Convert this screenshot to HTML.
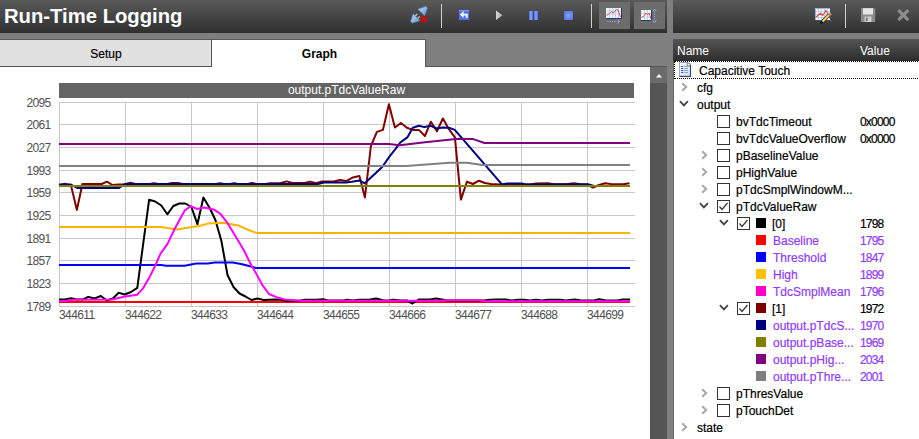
<!DOCTYPE html>
<html><head><meta charset="utf-8">
<style>
html,body{margin:0;padding:0;}
body{width:919px;height:439px;position:relative;overflow:hidden;background:#7f7f7f;font-family:"Liberation Sans", sans-serif;}
.ab{position:absolute;}
.hdr{position:absolute;top:0;height:33px;background:linear-gradient(#5a5a5a,#2f2f2f);}
.yl{position:absolute;left:0;width:50.5px;text-align:right;font-size:12px;line-height:16px;color:#505050;letter-spacing:-0.7px;}
.xl{position:absolute;top:307px;font-size:12px;line-height:16px;color:#505050;letter-spacing:-0.6px;}
.tt{position:absolute;font-size:12px;line-height:17px;color:#000;white-space:nowrap;-webkit-text-stroke:0.2px currentColor;}
.tt.p{color:#8f3cf5;}
.v{letter-spacing:-0.8px;}
.sep{position:absolute;width:1px;background:#d0d0d0;}
</style></head><body>
<!-- left header -->
<div class="hdr" style="left:0;width:667px"></div>
<div class="ab" style="left:4px;top:3px;font-size:20.25px;font-weight:bold;color:#fff;line-height:26px;">Run-Time Logging</div>
<!-- right header -->
<div class="hdr" style="left:673px;width:246px;"></div>
<svg class="ab" style="left:0;top:0" width="919" height="33">
  <defs>
    <linearGradient id="plug" x1="0" y1="0" x2="0" y2="1"><stop offset="0" stop-color="#b9d3f2"/><stop offset="1" stop-color="#6d9ad4"/></linearGradient>
    <linearGradient id="bl" x1="0" y1="0" x2="1" y2="0"><stop offset="0" stop-color="#4a6cf2"/><stop offset="0.5" stop-color="#8aa4fa"/><stop offset="1" stop-color="#4a6cf2"/></linearGradient>
    <radialGradient id="stopg" cx="0.5" cy="0.5" r="0.7"><stop offset="0" stop-color="#8aa4fa"/><stop offset="1" stop-color="#4a6cf2"/></radialGradient>
    <linearGradient id="playg" x1="0" y1="0" x2="1" y2="0"><stop offset="0" stop-color="#d4d4d4"/><stop offset="1" stop-color="#b0b0b0"/></linearGradient>
  </defs>
  <!-- disconnect icon -->
  <g transform="translate(418.9,14.8) rotate(-45)">
    <path d="M3.3,-4.6 L3.3,4.6 Q7,3.2 9.6,1.6 L10.8,1.6 L10.8,-1.6 L9.6,-1.6 Q7,-3.2 3.3,-4.6 Z" fill="url(#plug)" stroke="#5f8cc8" stroke-width="0.7"/>
    <path d="M-3.3,-4.6 L-3.3,4.6 Q-7,3.2 -9.2,1.6 L-10.4,1.6 L-10.4,-1.6 L-9.2,-1.6 Q-7,-3.2 -3.3,-4.6 Z" fill="url(#plug)" stroke="#5f8cc8" stroke-width="0.7"/>
    <rect x="-3.3" y="-2.4" width="2.8" height="1.3" fill="#c8c8c8"/>
    <rect x="-3.3" y="1.1" width="2.8" height="1.3" fill="#c8c8c8"/>
  </g>
  <path d="M420.8,16.5 L426.5,22.2 M426.5,16.5 L420.8,22.2" stroke="#e00000" stroke-width="2"/>
  <!-- back -->
  <rect x="459" y="10" width="10" height="10" fill="#5274f2"/>
  <rect x="459" y="10" width="10" height="1" fill="#7e98f8"/>
  <path d="M460,14.5 L463.6,11 V13.7 H467.6 V18 H465.9 V15.5 H463.6 V18 Z" fill="#fff"/>
  <!-- play -->
  <path d="M496,10.5 L502.4,15.2 L496,20 Z" fill="url(#playg)"/>
  <!-- pause -->
  <rect x="529" y="11" width="4" height="9" fill="url(#bl)"/>
  <rect x="534" y="11" width="4" height="9" fill="url(#bl)"/>
  <!-- stop -->
  <rect x="564" y="11" width="9" height="9" fill="url(#stopg)"/>
  <!-- buttons -->
  <rect x="599" y="2" width="31" height="27" fill="#6c6c6c"/>
  <rect x="634" y="2" width="31" height="27" fill="#6c6c6c"/>
  <!-- chart icon 1 -->
  <rect x="606" y="8" width="15.5" height="10.5" fill="#f4f7fc"/>
  <g stroke="#b4c4e4" stroke-width="0.8">
    <line x1="609.5" y1="8" x2="609.5" y2="18.5"/><line x1="612.5" y1="8" x2="612.5" y2="18.5"/><line x1="615.5" y1="8" x2="615.5" y2="18.5"/><line x1="618.5" y1="8" x2="618.5" y2="18.5"/>
    <line x1="606" y1="11" x2="621.5" y2="11"/><line x1="606" y1="14" x2="621.5" y2="14"/>
  </g>
  <path d="M606,18.5 H621.5 V8" fill="none" stroke="#1f3a6e" stroke-width="1"/>
  <path d="M606.5,15.5 L609.5,13.5 L611.5,11.5 L613,13 L616.5,9.5 L618,10 L620.5,17" fill="none" stroke="#e05050" stroke-width="1"/>
  <path d="M607.5,21.5 H617" stroke="#a8b4ff" stroke-width="1" stroke-dasharray="1,1.3"/>
  <path d="M617.5,19.8 L619.5,21.5 L617.5,23.2" fill="none" stroke="#a8b4ff" stroke-width="1"/>
  <!-- chart icon 2 -->
  <rect x="641" y="10" width="11" height="11" fill="#f4f7fc"/>
  <g stroke="#b4c4e4" stroke-width="0.8">
    <line x1="644.5" y1="10" x2="644.5" y2="21"/><line x1="647.5" y1="10" x2="647.5" y2="21"/>
    <line x1="641" y1="13.5" x2="652" y2="13.5"/><line x1="641" y1="17" x2="652" y2="17"/>
  </g>
  <path d="M641,20.5 H651.5 V10" fill="none" stroke="#1f3a6e" stroke-width="1"/>
  <path d="M641.5,17.5 L644.5,15.5 L646,13 L647.5,15 L649,13 L651,19" fill="none" stroke="#e05050" stroke-width="1"/>
  <path d="M654.6,11.5 V20" stroke="#a8b4ff" stroke-width="1" stroke-dasharray="1,1.3"/>
  <path d="M653,11 L654.6,9.2 L656.2,11 M653,20.5 L654.6,22.3 L656.2,20.5" fill="none" stroke="#a8b4ff" stroke-width="1"/>
  <!-- chart edit icon (right header) -->
  <rect x="815" y="8" width="16" height="13" fill="#f6f8fc"/>
  <g stroke="#c4d2ee" stroke-width="1">
    <line x1="818.5" y1="8" x2="818.5" y2="21"/><line x1="821.5" y1="8" x2="821.5" y2="21"/><line x1="824.5" y1="8" x2="824.5" y2="21"/><line x1="827.5" y1="8" x2="827.5" y2="21"/>
    <line x1="815" y1="11.5" x2="831" y2="11.5"/><line x1="815" y1="14.5" x2="831" y2="14.5"/><line x1="815" y1="17.5" x2="831" y2="17.5"/>
  </g>
  <path d="M815.5,20.5 V8.5 H830.5" fill="none" stroke="#a4b4d4" stroke-width="1"/>
  <path d="M815,20.5 H830.5 V8" fill="none" stroke="#34507e" stroke-width="1"/>
  <path d="M815.5,17.5 L820.5,13.3 L822.8,15.5 L825.8,10.5 L829,15.2 L830,18.5" fill="none" stroke="#e04444" stroke-width="1.1"/>
  <path d="M822.2,21.8 L829.2,14.8" stroke="#3e3a18" stroke-width="3.4"/>
  <path d="M822.4,21.6 L829,15" stroke="#eed660" stroke-width="2"/>
  <path d="M829.2,14.8 L830.8,13.2" stroke="#e48a6a" stroke-width="3"/>
  <path d="M820.8,23.2 L822.3,21.7" stroke="#000" stroke-width="2.2"/>
  <!-- save -->
  <path d="M861,8 H874 L875.2,9.2 V22 H861 Z" fill="#8c8c8c"/>
  <rect x="863" y="8.2" width="10" height="6.3" fill="#e6e6e6"/>
  <rect x="864.5" y="16.5" width="7" height="5.5" fill="#d0d0d0"/>
  <rect x="865.8" y="17.5" width="1.8" height="3.5" fill="#777"/>
  <!-- close -->
  <path d="M898.3,10.2 L908.3,20.2 M908.3,10.2 L898.3,20.2" stroke="#8c8c8c" stroke-width="3.3"/>
</svg>
<div class="sep" style="left:441px;top:4px;height:24px;"></div>
<div class="sep" style="left:591px;top:4px;height:24px;"></div>
<div class="sep" style="left:845px;top:4px;height:24px;"></div>


<!-- tabs -->
<div class="ab" style="left:0;top:39px;width:212px;height:27px;background:#e1e1e1;border-top:1px solid #5a5a5a;border-bottom:1px solid #555;border-right:1px solid #555;box-sizing:border-box;height:28px;"></div>
<div class="ab" style="left:0;top:42px;width:212px;text-align:center;font-size:12px;line-height:24px;color:#000;-webkit-text-stroke:0.2px #000;">Setup</div>
<div class="ab" style="left:212px;top:39px;width:214px;height:28px;background:#fff;border-top:1px solid #5a5a5a;border-right:1px solid #555;box-sizing:border-box;"></div>
<div class="ab" style="left:213px;top:42px;width:213px;text-align:center;font-size:12px;font-weight:bold;line-height:24px;color:#000;">Graph</div>
<div class="ab" style="left:426px;top:66px;width:241px;height:1px;background:#555;"></div>

<!-- content -->
<div class="ab" style="left:0;top:67px;width:650px;height:372px;background:#fff;"></div>
<div class="ab" style="left:650px;top:66px;width:17px;height:373px;background:#555;"></div>
<div class="ab" style="left:650px;top:67px;width:17px;height:16px;background:#6b6b6b;"></div>
<svg class="ab" style="left:655.5px;top:73.5px" width="6" height="4"><path d="M0,3.6 L3,0 L6,3.6 Z" fill="#fff"/></svg>

<!-- chart -->
<div class="ab" style="left:59px;top:83px;width:575px;height:15px;background:#646464;"></div>
<div class="ab" style="left:59px;top:83px;width:575px;text-align:center;font-size:12px;line-height:15px;color:#fff;">output.pTdcValueRaw</div>
<svg class="ab" style="left:0;top:0" width="919" height="439">
<g stroke="#c8c8c8" stroke-width="1">
<line x1="59.5" y1="102" x2="59.5" y2="306.5"/><line x1="125.5" y1="102" x2="125.5" y2="306.5"/><line x1="191.5" y1="102" x2="191.5" y2="306.5"/><line x1="257.5" y1="102" x2="257.5" y2="306.5"/><line x1="323.5" y1="102" x2="323.5" y2="306.5"/><line x1="389.5" y1="102" x2="389.5" y2="306.5"/><line x1="455.5" y1="102" x2="455.5" y2="306.5"/><line x1="521.5" y1="102" x2="521.5" y2="306.5"/><line x1="587.5" y1="102" x2="587.5" y2="306.5"/><line x1="59" y1="102.5" x2="635" y2="102.5"/><line x1="59" y1="124.5" x2="635" y2="124.5"/><line x1="59" y1="147.5" x2="635" y2="147.5"/><line x1="59" y1="170.5" x2="635" y2="170.5"/><line x1="59" y1="192.5" x2="635" y2="192.5"/><line x1="59" y1="215.5" x2="635" y2="215.5"/><line x1="59" y1="238.5" x2="635" y2="238.5"/><line x1="59" y1="260.5" x2="635" y2="260.5"/><line x1="59" y1="283.5" x2="635" y2="283.5"/><line x1="59" y1="306.5" x2="635" y2="306.5"/>
</g>
<polyline fill="none" stroke="#ff0000" stroke-width="2" stroke-linejoin="round" points="59.0,302.0 630.0,302.0"/>
<polyline fill="none" stroke="#000000" stroke-width="2" stroke-linejoin="round" points="59.0,299.6 65.0,299.6 71.0,298.3 77.0,299.5 83.0,299.5 88.2,296.9 94.5,298.5 100.9,296.0 106.8,300.5 112.8,298.5 118.7,292.8 124.6,294.5 131.0,292.0 137.3,287.8 149.1,199.8 155.2,201.5 161.3,205.5 167.3,214.3 173.3,206.0 179.3,203.5 185.4,203.5 191.4,207.0 197.4,224.2 203.4,197.5 209.4,207.5 215.4,220.0 221.4,241.0 227.5,275.0 233.5,287.0 239.5,293.5 245.5,296.5 251.5,300.0 257.6,298.5 263.6,300.0 269.6,299.8 275.6,299.6 281.0,299.8 287.0,300.8 299.0,300.8 305.0,299.8 317.0,299.8 323.0,299.2 329.0,300.6 343.0,300.5 347.0,299.8 353.0,300.6 359.0,299.8 369.0,299.8 376.0,298.5 383.0,300.2 389.0,300.5 393.0,299.8 401.0,300.5 407.0,300.5 412.6,303.5 418.6,299.5 430.0,299.5 436.0,298.6 442.0,299.5 448.0,300.6 484.0,300.6 490.0,299.8 496.0,299.6 506.0,299.6 512.0,300.6 518.0,299.8 524.0,299.8 530.0,300.6 536.0,299.8 542.0,300.6 548.0,299.8 560.0,299.8 566.0,300.6 574.8,299.5 581.0,300.6 593.0,300.6 599.0,299.2 605.0,300.3 617.0,300.6 623.0,299.5 630.0,299.5"/>
<polyline fill="none" stroke="#0000ff" stroke-width="2" stroke-linejoin="round" points="59.0,265.0 161.2,265.0 166.1,265.7 184.6,265.7 196.2,263.6 207.8,263.6 214.7,262.6 232.8,262.6 241.0,264.0 249.2,266.0 256.0,268.0 630.0,268.0"/>
<polyline fill="none" stroke="#ffb300" stroke-width="2" stroke-linejoin="round" points="59.0,227.0 160.8,227.0 177.0,229.4 200.0,225.8 208.2,223.6 223.2,222.8 238.3,225.5 247.8,229.7 256.7,233.0 630.0,233.0"/>
<polyline fill="none" stroke="#ff00ff" stroke-width="2" stroke-linejoin="round" points="59.0,301.0 65.0,301.0 71.0,300.0 77.0,299.8 112.0,299.5 125.0,296.5 137.3,294.7 143.4,287.8 149.6,276.9 155.1,266.0 160.5,253.7 167.4,244.1 175.0,228.3 184.7,210.5 190.9,206.1 197.0,209.0 203.8,207.5 209.4,208.5 214.4,209.8 220.5,213.9 227.3,222.8 236.9,238.5 243.7,250.0 251.2,265.0 256.7,274.6 262.2,284.8 269.0,294.0 276.5,297.1 284.7,299.5 300.0,300.8 440.0,300.8 446.0,300.3 480.0,300.3 485.0,301.2 630.0,301.2"/>
<polyline fill="none" stroke="#800000" stroke-width="2" stroke-linejoin="round" points="59.0,185.4 64.7,183.7 71.0,185.5 76.9,209.9 82.4,184.0 101.7,184.0 106.9,181.7 112.5,185.0 118.5,184.5 124.5,184.3 130.5,182.6 136.5,184.3 148.0,184.3 154.0,183.2 160.0,184.3 166.0,184.3 172.0,183.0 178.0,183.0 184.0,184.3 214.0,184.3 220.0,183.2 226.0,184.3 246.0,184.3 252.0,183.0 258.0,184.3 264.0,184.3 270.0,183.2 280.0,183.2 286.6,181.4 292.6,183.0 304.6,183.0 310.0,181.6 316.0,183.2 322.0,181.5 334.0,181.5 339.8,180.0 346.3,181.1 352.9,177.4 359.4,176.1 364.9,197.5 370.9,146.0 376.9,131.9 382.9,129.9 388.9,104.3 394.9,127.5 400.9,123.0 406.9,127.8 412.9,129.9 418.9,129.9 424.9,136.0 430.9,121.7 436.9,131.2 442.9,118.5 448.9,129.2 454.9,137.4 460.9,199.6 466.9,181.7 472.9,184.0 478.9,180.7 484.9,183.0 490.9,184.0 500.0,184.4 530.0,184.4 536.0,183.5 548.0,183.3 554.0,184.3 566.0,184.3 574.0,183.3 580.0,184.3 588.0,185.0 593.0,187.5 599.0,185.0 605.0,183.3 611.0,184.0 617.0,184.3 623.0,184.3 629.5,183.2"/>
<polyline fill="none" stroke="#000080" stroke-width="2" stroke-linejoin="round" points="59.0,184.5 71.0,184.5 77.0,188.0 119.0,188.0 125.0,184.0 230.0,184.0 234.0,183.3 238.0,184.0 318.0,184.0 324.0,182.5 346.0,182.5 351.8,181.8 359.4,180.5 364.8,183.3 382.2,167.0 389.8,156.1 395.0,149.7 400.0,142.8 407.3,137.4 412.8,127.8 418.9,125.8 424.4,127.1 430.8,125.8 436.7,128.5 442.8,127.5 449.0,127.8 454.8,129.9 501.9,184.4 507.0,183.6 522.0,183.6 526.0,184.4 588.0,184.3 594.0,186.0 630.0,186.0"/>
<polyline fill="none" stroke="#808000" stroke-width="2" stroke-linejoin="round" points="59.0,186.0 630.0,186.0"/>
<polyline fill="none" stroke="#800080" stroke-width="2" stroke-linejoin="round" points="59.0,144.0 388.8,144.0 399.6,145.2 425.0,142.2 458.4,138.7 472.5,138.9 484.5,143.0 630.0,143.0"/>
<polyline fill="none" stroke="#808080" stroke-width="2" stroke-linejoin="round" points="59.0,166.0 406.0,166.0 449.7,162.8 467.0,162.8 482.3,165.0 630.0,165.0"/>
</svg>
<div class="yl" style="top:94.5px">2095</div>
<div class="yl" style="top:116.5px">2061</div>
<div class="yl" style="top:139.5px">2027</div>
<div class="yl" style="top:162.5px">1993</div>
<div class="yl" style="top:184.5px">1959</div>
<div class="yl" style="top:207.5px">1925</div>
<div class="yl" style="top:230.5px">1891</div>
<div class="yl" style="top:252.5px">1857</div>
<div class="yl" style="top:275.5px">1823</div>
<div class="yl" style="top:298.5px">1789</div>
<div class="xl" style="left:59.0px">344611</div>
<div class="xl" style="left:125.0px">344622</div>
<div class="xl" style="left:191.0px">344633</div>
<div class="xl" style="left:257.0px">344644</div>
<div class="xl" style="left:323.0px">344655</div>
<div class="xl" style="left:389.0px">344666</div>
<div class="xl" style="left:455.0px">344677</div>
<div class="xl" style="left:521.0px">344688</div>
<div class="xl" style="left:587.0px">344699</div>

<!-- right panel -->
<div class="ab" style="left:673px;top:39px;width:246px;height:400px;background:#fff;border-left:1px solid #666;box-sizing:border-box;"></div>
<div class="ab" style="left:673px;top:39px;width:246px;height:22px;background:linear-gradient(#555555,#2c2c2c);"></div>
<div class="ab" style="left:677px;top:43px;font-size:12px;line-height:17px;color:#fff;">Name</div>
<div class="ab" style="left:860px;top:43px;font-size:12px;line-height:17px;color:#fff;">Value</div>
<div class="ab" style="left:674px;top:61px;width:260px;height:18px;border:1px dotted #000;box-sizing:border-box;"></div>
<svg class="ab" style="left:679px;top:62px" width="13" height="16"><defs><linearGradient id="docg" x1="0" y1="0" x2="1" y2="1"><stop offset="0" stop-color="#ffffff"/><stop offset="1" stop-color="#d8e0f0"/></linearGradient></defs><path d="M0.5,0.5 H8.5 L11.5,3.5 V14 H0.5 Z" fill="url(#docg)" stroke="#9aa8c4" stroke-width="1"/><path d="M11.5,3 V14.5 H0.5" fill="none" stroke="#34466a" stroke-width="1.2"/><circle cx="9.6" cy="2.6" r="1.6" fill="#fff" stroke="#4a5a7a" stroke-width="0.9"/><g fill="#2f62e6"><rect x="2" y="4" width="2.3" height="1.1"/><rect x="2" y="6" width="2.3" height="1.1"/><rect x="2" y="8" width="2.3" height="1.1"/><rect x="2" y="10" width="2.3" height="1.1"/></g><g fill="#98a2b6"><rect x="5.2" y="4" width="3.8" height="1.1"/><rect x="5.2" y="6" width="3.8" height="1.1"/><rect x="5.2" y="8" width="3.8" height="1.1"/><rect x="5.2" y="10" width="3.8" height="1.1"/></g></svg>
<div class="tt" style="left:699px;top:62.5px">Capacitive Touch</div>
<svg class="ab" style="left:681px;top:82.0px" width="8" height="10"><polyline points="1.2,1.2 5.2,5 1.2,8.8" fill="none" stroke="#a6a6a6" stroke-width="1.9"/></svg>
<div class="tt" style="left:697px;top:79.5px">cfg</div>
<svg class="ab" style="left:679px;top:100.0px" width="12" height="8"><polyline points="0.9,1.2 4.9,5.4 8.9,1.2" fill="none" stroke="#444444" stroke-width="1.8"/></svg>
<div class="tt" style="left:697px;top:96.5px">output</div>
<svg class="ab" style="left:717px;top:114.5px" width="13" height="13"><rect x="0.5" y="0.5" width="12" height="12" fill="#fff" stroke="#333"/></svg>
<div class="tt" style="left:736px;top:113.5px">bvTdcTimeout</div>
<div class="tt v" style="left:860px;top:113.5px">0x0000</div>
<svg class="ab" style="left:717px;top:131.5px" width="13" height="13"><rect x="0.5" y="0.5" width="12" height="12" fill="#fff" stroke="#333"/></svg>
<div class="tt" style="left:736px;top:130.5px">bvTdcValueOverflow</div>
<div class="tt v" style="left:860px;top:130.5px">0x0000</div>
<svg class="ab" style="left:701px;top:150.0px" width="8" height="10"><polyline points="1.2,1.2 5.2,5 1.2,8.8" fill="none" stroke="#a6a6a6" stroke-width="1.9"/></svg>
<svg class="ab" style="left:717px;top:148.5px" width="13" height="13"><rect x="0.5" y="0.5" width="12" height="12" fill="#fff" stroke="#333"/></svg>
<div class="tt" style="left:736px;top:147.5px">pBaselineValue</div>
<svg class="ab" style="left:701px;top:167.0px" width="8" height="10"><polyline points="1.2,1.2 5.2,5 1.2,8.8" fill="none" stroke="#a6a6a6" stroke-width="1.9"/></svg>
<svg class="ab" style="left:717px;top:165.5px" width="13" height="13"><rect x="0.5" y="0.5" width="12" height="12" fill="#fff" stroke="#333"/></svg>
<div class="tt" style="left:736px;top:164.5px">pHighValue</div>
<svg class="ab" style="left:701px;top:184.0px" width="8" height="10"><polyline points="1.2,1.2 5.2,5 1.2,8.8" fill="none" stroke="#a6a6a6" stroke-width="1.9"/></svg>
<svg class="ab" style="left:717px;top:182.5px" width="13" height="13"><rect x="0.5" y="0.5" width="12" height="12" fill="#fff" stroke="#333"/></svg>
<div class="tt" style="left:736px;top:181.5px">pTdcSmplWindowM...</div>
<svg class="ab" style="left:699px;top:202.0px" width="12" height="8"><polyline points="0.9,1.2 4.9,5.4 8.9,1.2" fill="none" stroke="#444444" stroke-width="1.8"/></svg>
<svg class="ab" style="left:717px;top:199.5px" width="13" height="13"><rect x="0.5" y="0.5" width="12" height="12" fill="#fff" stroke="#333"/><polyline points="2.5,6.5 5,9.5 10.5,3" fill="none" stroke="#333" stroke-width="1.2"/></svg>
<div class="tt" style="left:736px;top:198.5px">pTdcValueRaw</div>
<svg class="ab" style="left:719px;top:219.0px" width="12" height="8"><polyline points="0.9,1.2 4.9,5.4 8.9,1.2" fill="none" stroke="#444444" stroke-width="1.8"/></svg>
<svg class="ab" style="left:737px;top:216.5px" width="13" height="13"><rect x="0.5" y="0.5" width="12" height="12" fill="#fff" stroke="#333"/><polyline points="2.5,6.5 5,9.5 10.5,3" fill="none" stroke="#333" stroke-width="1.2"/></svg>
<div class="ab" style="left:756px;top:218.0px;width:10px;height:10px;background:#000000"></div>
<div class="tt" style="left:772px;top:215.5px">[0]</div>
<div class="tt v" style="left:860px;top:215.5px">1798</div>
<div class="ab" style="left:756px;top:235.0px;width:10px;height:10px;background:#ff0000"></div>
<div class="tt p" style="left:773px;top:232.5px">Baseline</div>
<div class="tt p v" style="left:860px;top:232.5px">1795</div>
<div class="ab" style="left:756px;top:252.0px;width:10px;height:10px;background:#0000ff"></div>
<div class="tt p" style="left:773px;top:249.5px">Threshold</div>
<div class="tt p v" style="left:860px;top:249.5px">1847</div>
<div class="ab" style="left:756px;top:269.0px;width:10px;height:10px;background:#ffc000"></div>
<div class="tt p" style="left:773px;top:266.5px">High</div>
<div class="tt p v" style="left:860px;top:266.5px">1899</div>
<div class="ab" style="left:756px;top:286.0px;width:10px;height:10px;background:#ff00cc"></div>
<div class="tt p" style="left:773px;top:283.5px">TdcSmplMean</div>
<div class="tt p v" style="left:860px;top:283.5px">1796</div>
<svg class="ab" style="left:719px;top:304.0px" width="12" height="8"><polyline points="0.9,1.2 4.9,5.4 8.9,1.2" fill="none" stroke="#444444" stroke-width="1.8"/></svg>
<svg class="ab" style="left:737px;top:301.5px" width="13" height="13"><rect x="0.5" y="0.5" width="12" height="12" fill="#fff" stroke="#333"/><polyline points="2.5,6.5 5,9.5 10.5,3" fill="none" stroke="#333" stroke-width="1.2"/></svg>
<div class="ab" style="left:756px;top:303.0px;width:10px;height:10px;background:#800000"></div>
<div class="tt" style="left:772px;top:300.5px">[1]</div>
<div class="tt v" style="left:860px;top:300.5px">1972</div>
<div class="ab" style="left:756px;top:320.0px;width:10px;height:10px;background:#000080"></div>
<div class="tt p" style="left:773px;top:317.5px">output.pTdcS...</div>
<div class="tt p v" style="left:860px;top:317.5px">1970</div>
<div class="ab" style="left:756px;top:337.0px;width:10px;height:10px;background:#808000"></div>
<div class="tt p" style="left:773px;top:334.5px">output.pBase...</div>
<div class="tt p v" style="left:860px;top:334.5px">1969</div>
<div class="ab" style="left:756px;top:354.0px;width:10px;height:10px;background:#800080"></div>
<div class="tt p" style="left:773px;top:351.5px">output.pHig...</div>
<div class="tt p v" style="left:860px;top:351.5px">2034</div>
<div class="ab" style="left:756px;top:371.0px;width:10px;height:10px;background:#808080"></div>
<div class="tt p" style="left:773px;top:368.5px">output.pThre...</div>
<div class="tt p v" style="left:860px;top:368.5px">2001</div>
<svg class="ab" style="left:701px;top:388.0px" width="8" height="10"><polyline points="1.2,1.2 5.2,5 1.2,8.8" fill="none" stroke="#a6a6a6" stroke-width="1.9"/></svg>
<svg class="ab" style="left:717px;top:386.5px" width="13" height="13"><rect x="0.5" y="0.5" width="12" height="12" fill="#fff" stroke="#333"/></svg>
<div class="tt" style="left:736px;top:385.5px">pThresValue</div>
<svg class="ab" style="left:701px;top:405.0px" width="8" height="10"><polyline points="1.2,1.2 5.2,5 1.2,8.8" fill="none" stroke="#a6a6a6" stroke-width="1.9"/></svg>
<svg class="ab" style="left:717px;top:403.5px" width="13" height="13"><rect x="0.5" y="0.5" width="12" height="12" fill="#fff" stroke="#333"/></svg>
<div class="tt" style="left:736px;top:402.5px">pTouchDet</div>
<svg class="ab" style="left:681px;top:422.0px" width="8" height="10"><polyline points="1.2,1.2 5.2,5 1.2,8.8" fill="none" stroke="#a6a6a6" stroke-width="1.9"/></svg>
<div class="tt" style="left:697px;top:419.5px">state</div>
</body></html>
